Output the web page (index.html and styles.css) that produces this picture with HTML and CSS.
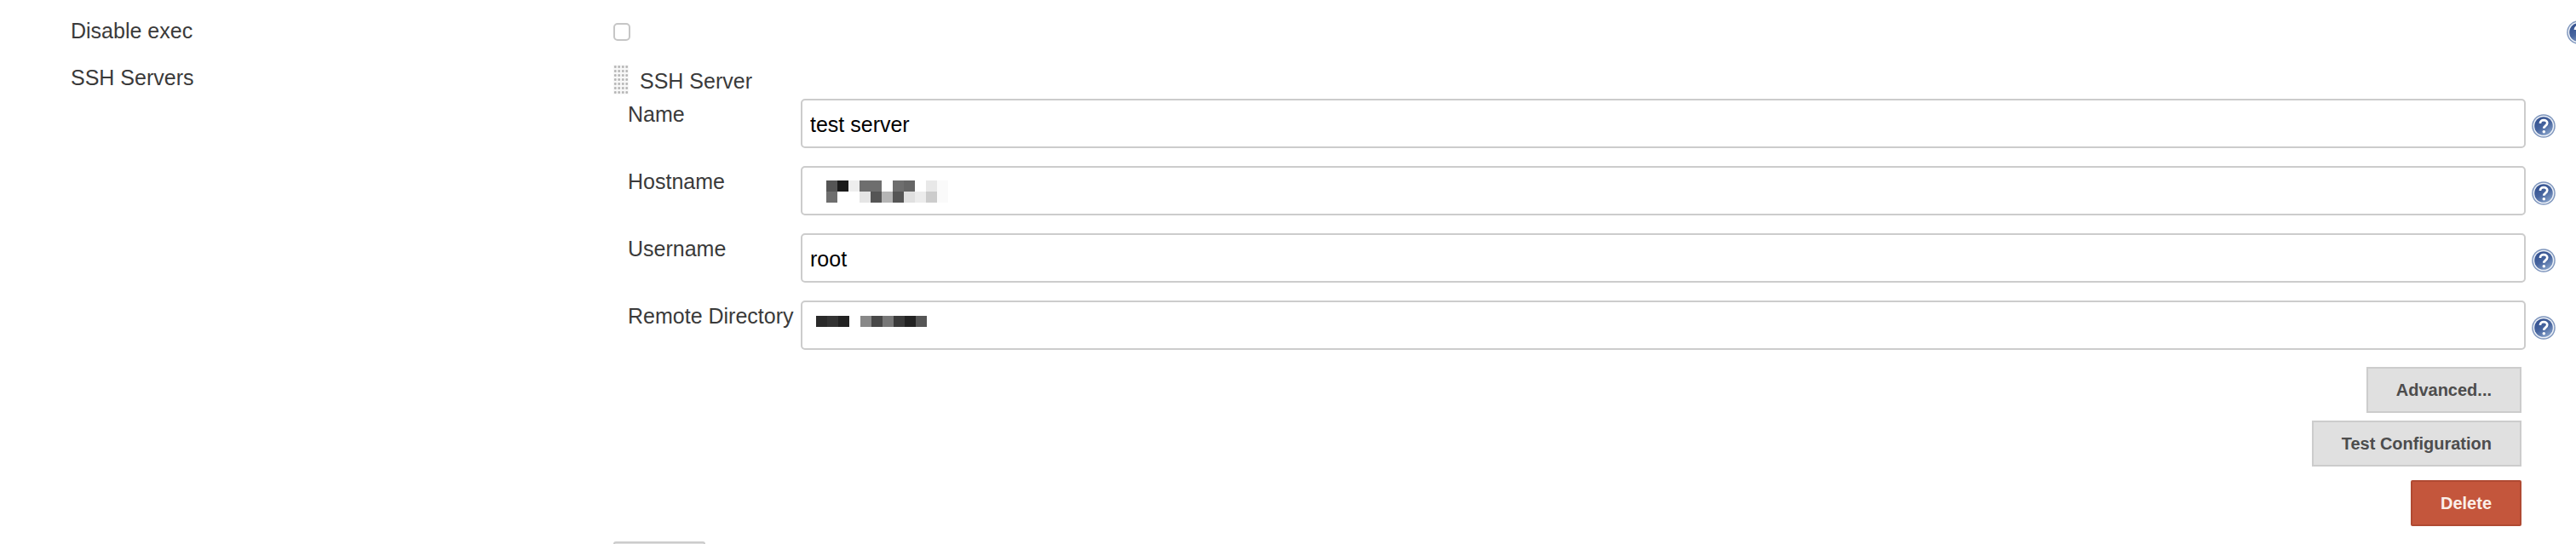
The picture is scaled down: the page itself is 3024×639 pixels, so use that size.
FILE: index.html
```html
<!DOCTYPE html>
<html lang="en">
  <head>
    <meta charset="UTF-8" />
    <title>SSH Servers</title>
    <link rel="stylesheet" href="styles.css">
  </head>
  <body>
    <svg class="icon-defs" width="0" height="0">
      <defs>
        <linearGradient id="helpFill" x1="0" y1="0" x2="0.6" y2="1">
          <stop offset="0" stop-color="#2f4c8c" />
          <stop offset="0.6" stop-color="#47659f" />
          <stop offset="1" stop-color="#7f9ac4" />
        </linearGradient>
        <symbol id="help" viewBox="0 0 27 27">
          <circle cx="13.5" cy="13.5" r="13.3" fill="#7f96bd" />
          <circle cx="13.5" cy="13.5" r="11.9" fill="#eef2f8" />
          <circle cx="13.5" cy="13.5" r="10.4" fill="url(#helpFill)" />
          <path d="M9.6 10.6c0-2.4 1.8-3.7 4-3.7s4 1.3 4 3.3c0 2.9-3.8 2.9-3.8 6" fill="none" stroke="#fff" stroke-width="2.6" />
          <circle cx="13.8" cy="20" r="1.7" fill="#fff" />
        </symbol>
      </defs>
    </svg>

    <!-- Disable exec -->
    <div class="row row-exec">
      <div class="row-label">Disable exec</div>
      <div class="row-value"><input type="checkbox" class="check" /></div>
      <svg class="help help-top"><use href="#help" /></svg>
    </div>

    <!-- SSH Servers -->
    <div class="row row-servers">
      <div class="row-label">SSH Servers</div>
      <div class="row-value">
        <div class="server-head">
          <span class="grip"></span>
          <span class="server-title">SSH Server</span>
        </div>

        <div class="field">
          <label>Name</label>
          <div class="field-box"><input type="text" value="test server" /></div>
          <svg class="help"><use href="#help" /></svg>
        </div>

        <div class="field">
          <label>Hostname</label>
          <div class="field-box">
            <input type="text" value="" />
            <svg class="blur blur-host" viewBox="0 0 11 2" shape-rendering="crispEdges">
              <rect x="0" y="0" width="1" height="1" fill="#555" />
              <rect x="1" y="0" width="1" height="1" fill="#1a1a1a" />
              <rect x="2" y="0" width="1" height="1" fill="#eee" />
              <rect x="3" y="0" width="2" height="1" fill="#6e6e6e" />
              <rect x="6" y="0" width="1" height="1" fill="#6e6e6e" />
              <rect x="7" y="0" width="1" height="1" fill="#666" />
              <rect x="9" y="0" width="1" height="1" fill="#e8e8e8" />
              <rect x="10" y="0" width="1" height="1" fill="#fafafa" />
              <rect x="0" y="1" width="1" height="1" fill="#6e6e6e" />
              <rect x="3" y="1" width="1" height="1" fill="#e5e5e5" />
              <rect x="4" y="1" width="1" height="1" fill="#555" />
              <rect x="5" y="1" width="1" height="1" fill="#b5b5b5" />
              <rect x="6" y="1" width="1" height="1" fill="#555" />
              <rect x="7" y="1" width="1" height="1" fill="#e0e0e0" />
              <rect x="8" y="1" width="1" height="1" fill="#ececec" />
              <rect x="9" y="1" width="1" height="1" fill="#ccc" />
              <rect x="10" y="1" width="1" height="1" fill="#fafafa" />
            </svg>
          </div>
          <svg class="help"><use href="#help" /></svg>
        </div>

        <div class="field">
          <label>Username</label>
          <div class="field-box"><input type="text" value="root" /></div>
          <svg class="help"><use href="#help" /></svg>
        </div>

        <div class="field">
          <label>Remote Directory</label>
          <div class="field-box">
            <input type="text" value="" />
            <svg class="blur blur-dir" viewBox="0 0 10 1" shape-rendering="crispEdges">
              <rect x="0" y="0" width="1" height="1" fill="#2a2a2a" />
              <rect x="1" y="0" width="1" height="1" fill="#333" />
              <rect x="2" y="0" width="1" height="1" fill="#222" />
              <rect x="4" y="0" width="1" height="1" fill="#888" />
              <rect x="5" y="0" width="1" height="1" fill="#484848" />
              <rect x="6" y="0" width="1" height="1" fill="#777" />
              <rect x="7" y="0" width="1" height="1" fill="#3a3a3a" />
              <rect x="8" y="0" width="1" height="1" fill="#222" />
              <rect x="9" y="0" width="1" height="1" fill="#555" />
            </svg>
          </div>
          <svg class="help"><use href="#help" /></svg>
        </div>

        <div class="actions">
          <button class="btn">Advanced...</button>
          <button class="btn btn-test">Test Configuration</button>
          <button class="btn btn-danger">Delete</button>
        </div>

        <button class="btn btn-add"></button>
      </div>
    </div>
  </body>
</html>
```

FILE: styles.css
```css
html,
body {
  margin: 0;
  height: 639px;
  overflow: hidden;
  background-color: #fff;
}

body {
  font-family: "Liberation Sans", Arial, sans-serif;
  font-size: 25px;
  line-height: 30px;
  color: #3a3a3a;
}

.icon-defs {
  position: absolute;
}

.row {
  display: flex;
  width: 3041px; /* help icon of the first row is cut by the window edge */
}

.row-label {
  width: 637px;
  margin-left: 83px;
  flex: none;
}

.row-value {
  flex: 1;
}

.row-exec {
  height: 55px;
  padding-top: 21px;
}

.row-exec .row-value {
  padding-top: 6px;
}

.row-servers {
  width: 3024px;
}

.check {
  appearance: none;
  display: block;
  width: 20px;
  height: 21px;
  margin: 0;
  border: 2px solid #c6c6c6;
  border-radius: 5px;
  background-color: #fff;
}

.help {
  display: block;
  flex: none;
  width: 28px;
  height: 28px;
}

.help-top {
  margin-top: 3px;
}

/* dragging handle + block title */
.server-head {
  display: flex;
  height: 40px;
}

.grip {
  width: 18px;
  height: 35px;
  background-color: #f8f8f8;
  background-image: radial-gradient(circle, #b5b5b5 1.2px, transparent 1.6px);
  background-size: 4.5px 5px;
}

.server-title {
  margin-left: 13px;
  padding-top: 4px;
}

.field {
  display: flex;
  height: 79px;
  padding-left: 17px;
}

.field label {
  width: 203px;
  flex: none;
  padding-top: 3px;
  white-space: nowrap;
}

.field-box {
  position: relative;
  width: 2025px;
  height: 58px;
  flex: none;
}

.field-box input {
  box-sizing: border-box;
  width: 100%;
  height: 100%;
  padding: 3px 9px 0;
  border: 2px solid #ccc;
  border-radius: 5px;
  font-family: "Liberation Sans", Arial, sans-serif;
  font-size: 25px;
  color: #000;
  background-color: #fff;
}

.field .help {
  margin-left: 7px;
  margin-top: 18px;
}

.blur {
  position: absolute;
  display: block;
}

.blur-host {
  left: 28px;
  top: 17px;
  width: 147px;
  height: 26px;
}

.blur-dir {
  left: 16px;
  top: 18px;
  width: 133px;
  height: 13px;
}

.actions {
  display: flex;
  flex-direction: column;
  align-items: flex-end;
  width: 2240px;
  margin-top: -1px;
}

.btn {
  box-sizing: border-box;
  height: 54px;
  padding: 0 33px;
  border: 2px solid #ccc;
  background-color: #e0e0e0;
  color: #4d4d4d;
  font-family: "Liberation Sans", Arial, sans-serif;
  font-size: 20px;
  font-weight: bold;
}

.btn-test {
  margin-top: 9px;
}

.btn-danger {
  margin-top: 16px;
  border-color: #b04a32;
  border-radius: 2px;
  background-color: #c4563c;
  color: #fbefe9;
}

.btn-add {
  display: block;
  width: 108px;
  margin-top: 18px;
  padding: 0;
  border-radius: 3px;
}
```
